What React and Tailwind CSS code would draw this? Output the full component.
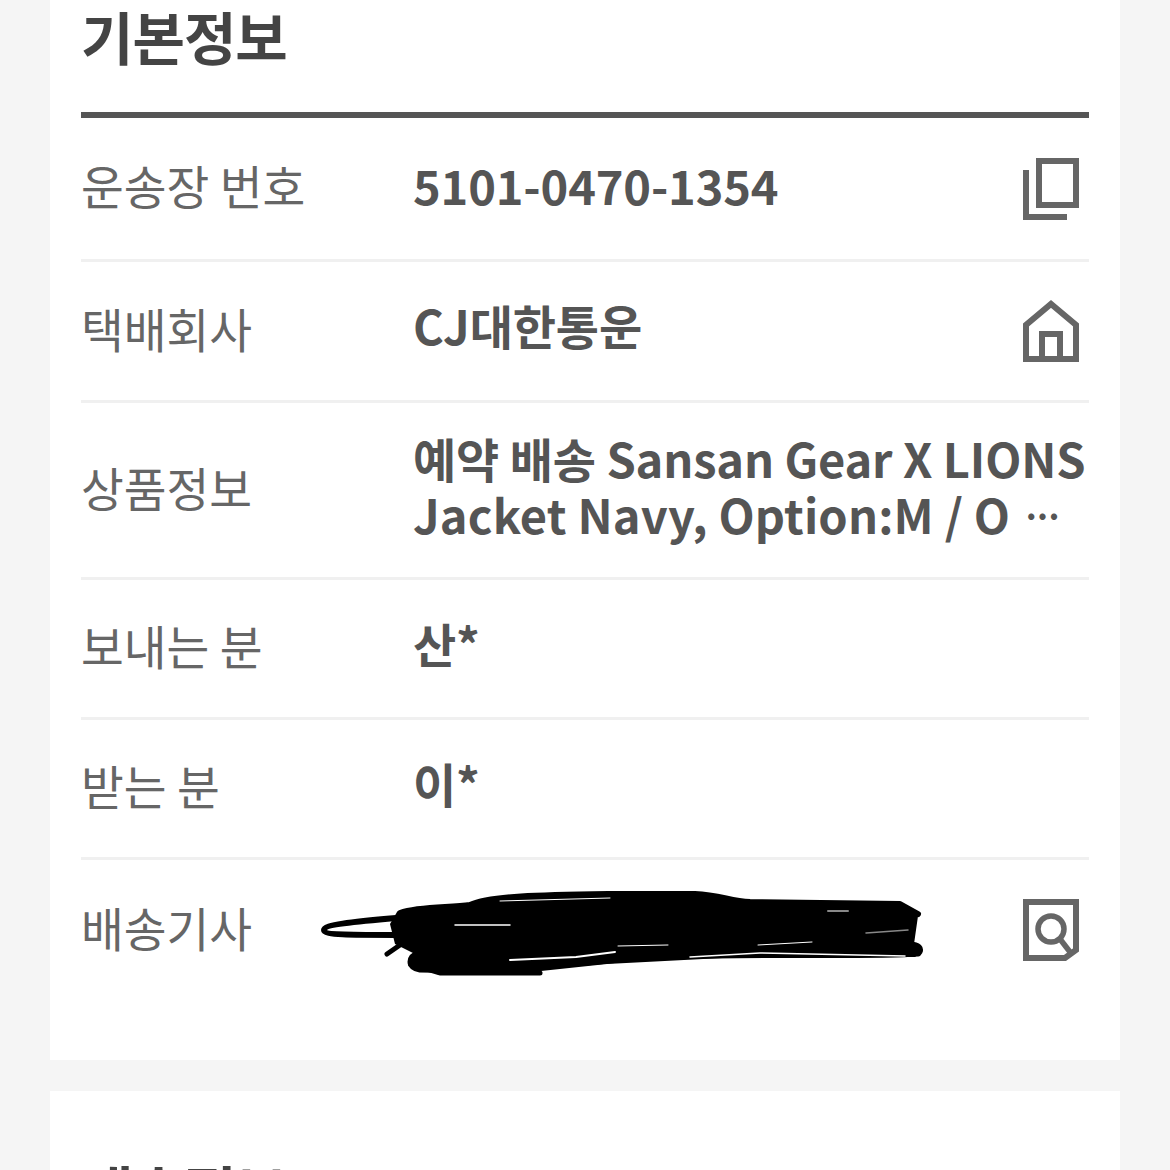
const sans = '"Noto Sans CJK KR", "Noto Sans", sans-serif';

function CopyIcon() {
  return (
    <svg width="56" height="62" viewBox="0 0 56 62" fill="none" stroke="#666" strokeWidth="6">
      <rect x="16" y="3" width="37" height="44" />
      <path d="M3 12V59H44" />
    </svg>
  );
}
function HomeIcon() {
  return (
    <svg width="56" height="62" viewBox="0 0 56 62" fill="none" stroke="#666" strokeWidth="6">
      <path d="M3 59V25L28 4L53 25V59Z" />
      <path d="M19 59V34H37V59" />
    </svg>
  );
}
function DocIcon() {
  return (
    <svg width="56" height="62" viewBox="0 0 56 62" fill="none" stroke="#666">
      <path d="M3 3H53V51L42 59H3Z" strokeWidth="6" />
      <circle cx="28" cy="30" r="13" strokeWidth="5.5" />
      <path d="M37 40L47 53" strokeWidth="5.5" />
    </svg>
  );
}
function Scribble() {
  return (
    <svg
      width="610"
      height="90"
      viewBox="318 890 610 90"
      fill="none"
      stroke="#000"
      strokeLinecap="round"
      strokeLinejoin="round"
      className="absolute left-[237px] top-[29px]"
    >
      <path
        d="M397 913L418 908L470 905L495 900L608 894L695 894L746 902L900 904L918 917L914 945L923 952L915 958L761 957L607 965L541 972L438 976L408 967L415 955L395 945L390 925Z"
        fill="#000"
        stroke="none"
      />
      <path d="M400 914C420 907 450 909 470 906C490 897 540 896 608 895H695C720 896 730 902 750 903L900 905L918 915" strokeWidth="6" />
      <path d="M396 919C350 923 324 926 324 931C324 936 350 936 396 936" strokeWidth="6" />
      <path d="M387 955L400 946" strokeWidth="5" />
      <path d="M420 954C408 958 408 968 420 970C500 972 560 965 620 960C720 952 860 958 918 954C922 950 918 946 910 946" strokeWidth="7" />
      <path d="M440 974H540" strokeWidth="5" />
      <g stroke="#fff">
        <path d="M455 926H510" strokeWidth="1.5" />
        <path d="M618 947L668 946" strokeWidth="1" />
        <path d="M510 961L576 958L615 953" strokeWidth="2" />
        <path d="M758 946L812 943" strokeWidth="1" />
        <path d="M690 958L760 954L905 957" strokeWidth="1.5" />
        <path d="M500 902L610 899" strokeWidth="1" />
      </g>
      <g stroke="#888">
        <path d="M828 912H848" strokeWidth="2" />
        <path d="M866 934L908 931" strokeWidth="1.5" />
      </g>
    </svg>
  );
}

function Row({ label, children, icon, className, valueClass = "pb-[7px]" }) {
  return (
    <div className={`flex items-center border-b-[3px] border-[#f0f0f0] ${className}`}>
      <div className="w-[332px] shrink-0 pb-[7px] text-[46.5px] leading-[56px] text-[#666]">{label}</div>
      <div className={`min-w-0 flex-1 text-[47px] font-bold leading-[56px] tracking-[-0.15px] text-[#555] ${valueClass}`}>{children}</div>
      {icon && <div className="mr-[10px] flex w-[56px] shrink-0 justify-center">{icon}</div>}
    </div>
  );
}

export default function App() {
  return (
    <div className="h-[1170px] overflow-hidden bg-[#f5f5f5] px-[50px]" style={{ fontFamily: sans }}>
      <section className="h-[1060px] bg-white px-[31px]">
        <h2 className="h-[112px] text-[57px] font-bold leading-[71px] tracking-[-1px] text-[#444]">기본정보</h2>
        <div className="h-[6px] bg-[#555]" />
        <Row label="운송장 번호" icon={<CopyIcon />} className="h-[144px]">5101-0470-1354</Row>
        <Row label="택배회사" icon={<HomeIcon />} className="h-[141px]" valueClass="pb-[12px]">CJ대한통운</Row>
        <Row label="상품정보" className="h-[177px]" valueClass="pb-[8px]">
          <div className="whitespace-nowrap">예약 배송 Sansan Gear X LIONS</div>
          <div className="whitespace-nowrap tracking-[0.15px]">Jacket Navy, Option:M / O<span className="ml-[8px] font-normal tracking-[-15px]">···</span></div>
        </Row>
        <Row label="보내는 분" className="h-[140px]" valueClass="pb-[12px]">산*</Row>
        <Row label="받는 분" className="h-[140px]" valueClass="pb-[11px]">이*</Row>
        <div className="relative flex h-[140px] items-center">
          <div className="pb-[7px] text-[46.5px] leading-[56px] text-[#666]">배송기사</div>
          <Scribble />
          <div className="ml-auto mr-[10px]"><DocIcon /></div>
        </div>
      </section>
      <section className="mt-[31px] h-[200px] bg-white px-[31px] pt-[60px]">
        <h2 className="text-[57px] font-bold leading-[76px] tracking-[-1px] text-[#444]">배송정보</h2>
      </section>
    </div>
  );
}
